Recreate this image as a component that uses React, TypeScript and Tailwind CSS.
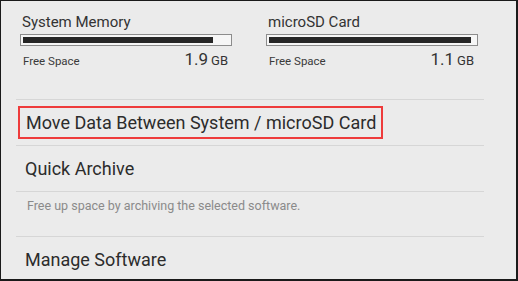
import React from 'react';

const font = { fontFamily: 'Roboto, "Noto Sans", sans-serif' };

function Storage({ title, size, fill }: { title: string; size: string; fill: string }) {
  return (
    <div className="w-[212px]">
      <div className="pl-[2px] text-[15px] leading-[20px] text-[#333]">{title}</div>
      <div className="mt-[2px] h-[12px] border border-[#8c8c8c] bg-[#f6f6f6] p-[2px]">
        <div className={`h-full bg-[#262626] ${fill}`} />
      </div>
      <div className="mt-[3px] flex items-baseline justify-between pl-[3px] pr-[4px] leading-[20px]">
        <span className="text-[11.5px] text-[#3a3a3a]">Free Space</span>
        <span className="text-[#333]">
          <span className="text-[17px]">{size}</span>
          <span className="ml-[3px] text-[13px]">GB</span>
        </span>
      </div>
    </div>
  );
}

export default function App() {
  return (
    <div
      className="h-[281px] w-[518px] overflow-hidden border-t border-l border-r-2 border-b-2 border-[#1a1a1a] bg-[#ebebeb]"
      style={font}
    >
      <div className="flex gap-[34px] pl-[19px] pt-[11px]">
        <Storage title="System Memory" size="1.9" fill="w-[92%]" />
        <Storage title="microSD Card" size="1.1" fill="w-[98%]" />
      </div>

      <div className="mx-[15px] mt-[28px] w-[468px]">
        <div className="h-px bg-[#d6d6d6]" />
        <div className="flex h-[45px] items-center">
          <div className="ml-[2px] flex h-[33px] w-[365px] items-center whitespace-nowrap border-[2.5px] border-[#ee3b3b] pl-[6px] text-[18px] text-[#2c2c2c]">
            Move Data Between System / microSD Card
          </div>
        </div>
        <div className="h-px bg-[#d6d6d6]" />
        <div className="flex h-[45px] items-center pl-[9px] text-[18px] text-[#2c2c2c]">Quick Archive</div>
        <div className="h-px bg-[#d6d6d6]" />
        <div className="h-[44px] pl-[11px] pt-[5px] text-[12.5px] text-[#8a8a8a]">
          Free up space by archiving the selected software.
        </div>
        <div className="h-px bg-[#d6d6d6]" />
        <div className="flex h-[44px] items-center pl-[9px] text-[18px] text-[#2c2c2c]">Manage Software</div>
      </div>
    </div>
  );
}
